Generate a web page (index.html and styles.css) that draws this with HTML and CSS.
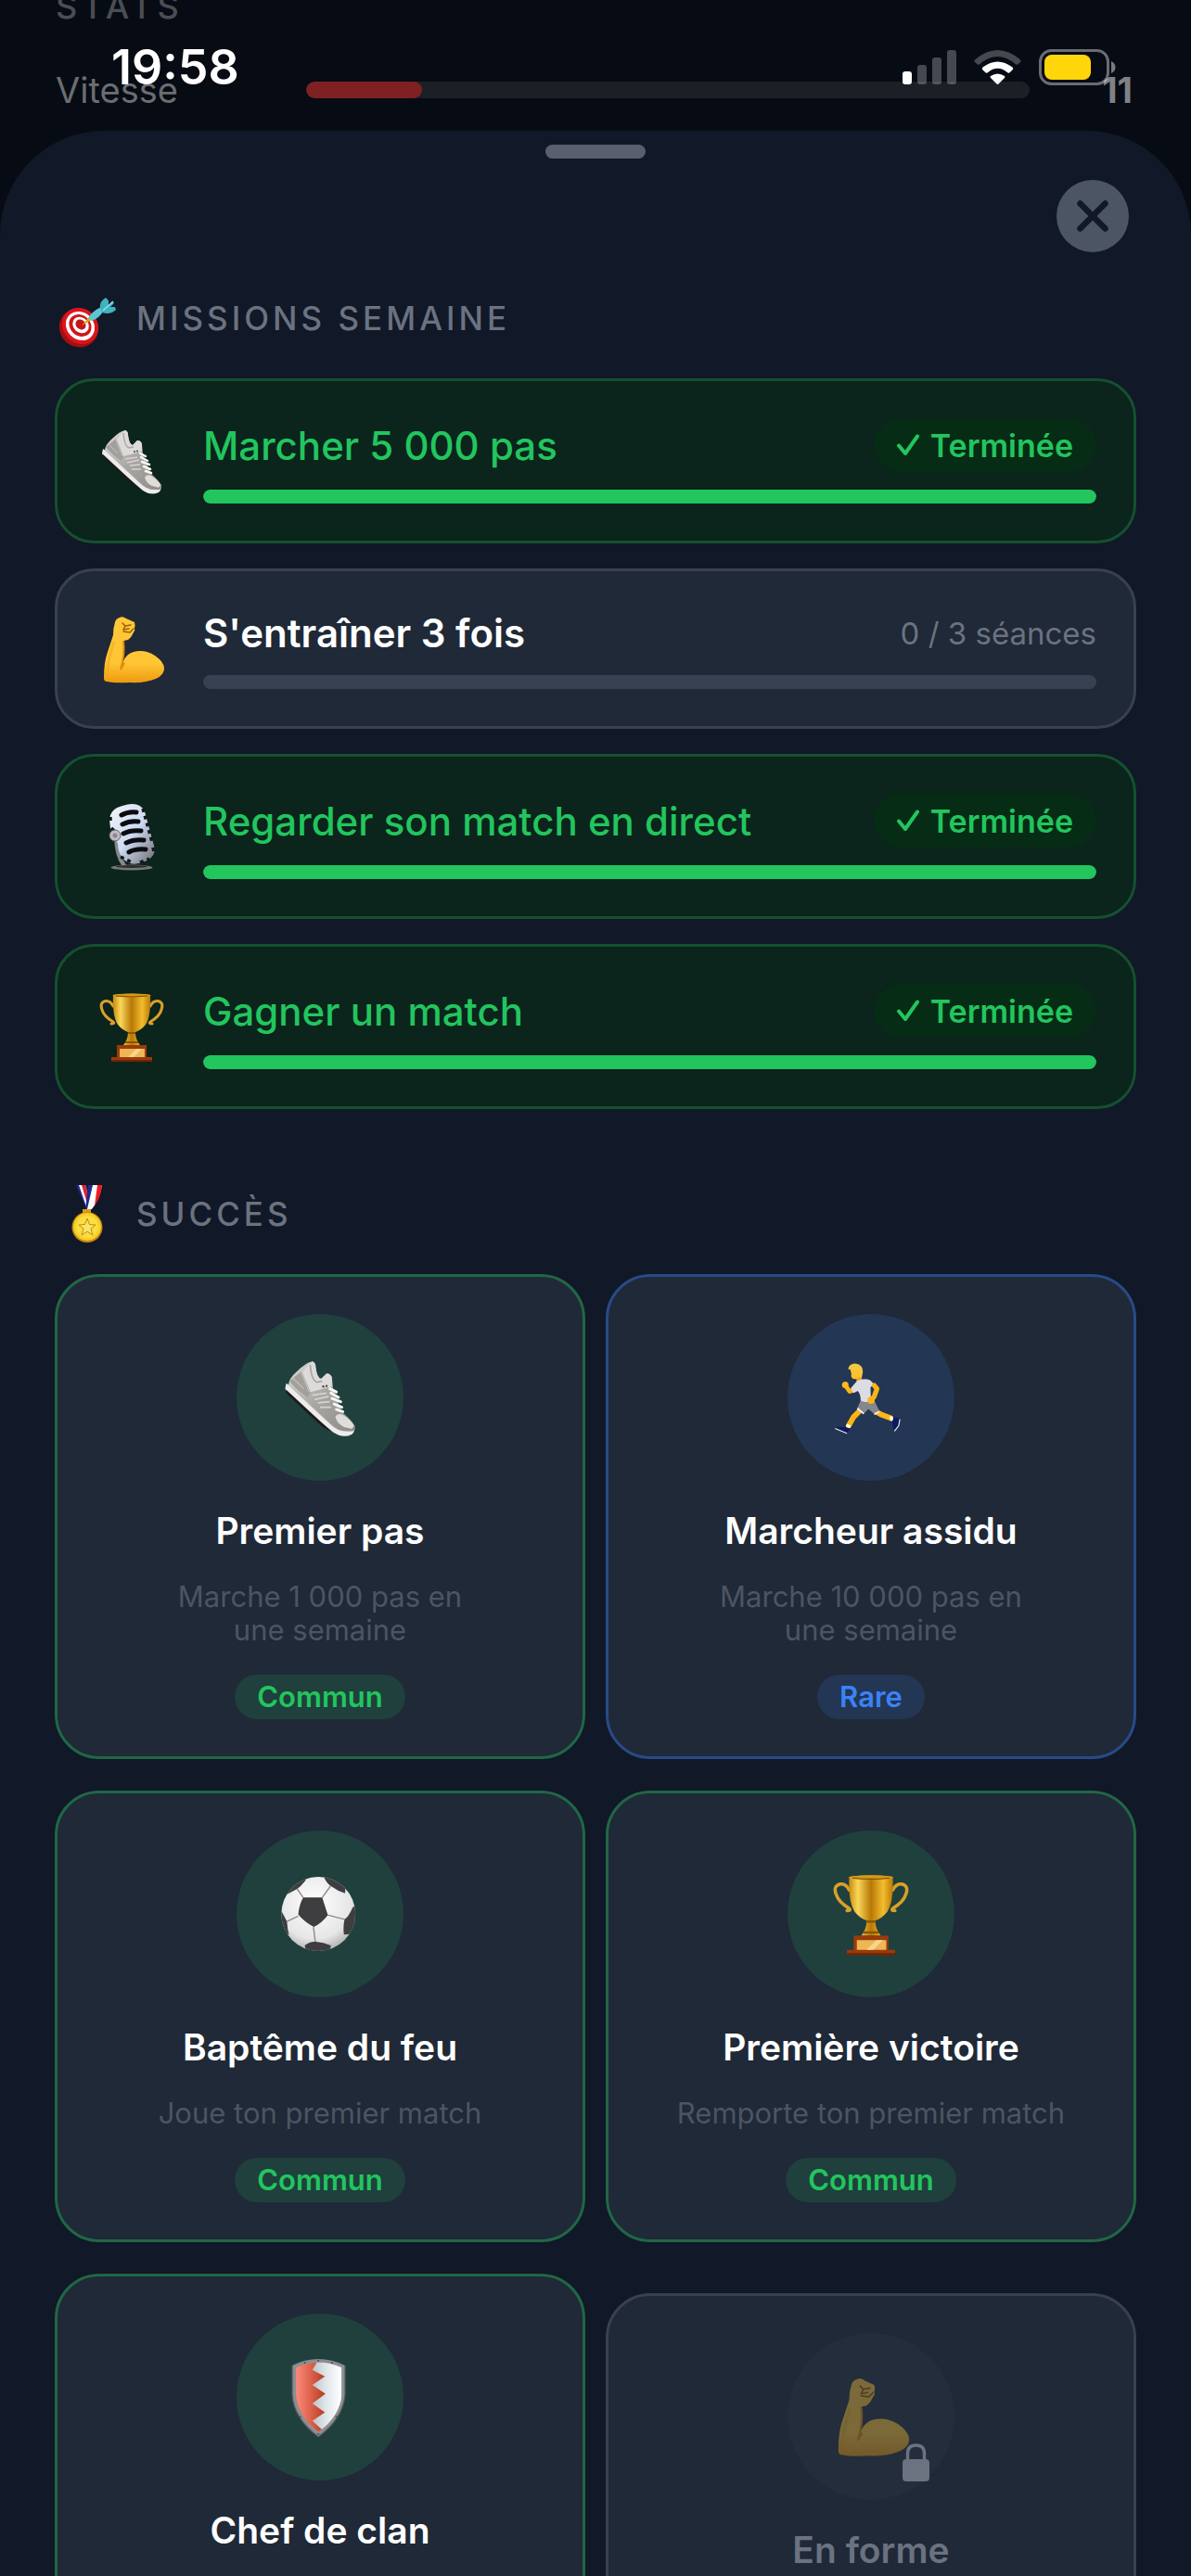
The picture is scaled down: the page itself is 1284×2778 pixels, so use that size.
FILE: index.html
```html
<!DOCTYPE html>
<html lang="fr">
<head>
<meta charset="utf-8">
<meta name="viewport" content="width=device-width, initial-scale=1">
<title>Missions et succès</title>
<link rel="stylesheet" href="styles.css">
</head>
<body>
<svg class="sprite" aria-hidden="true">
  <defs>
    <linearGradient id="gold" x1="0" x2="1" y1="0" y2="0">
      <stop offset="0" stop-color="#c98a0c"/><stop offset=".2" stop-color="#f9d75a"/><stop offset=".5" stop-color="#b87806"/><stop offset=".78" stop-color="#f3bd2e"/><stop offset="1" stop-color="#b97a08"/>
    </linearGradient>
    <linearGradient id="skin" x1="0" x2="0" y1="0" y2="1">
      <stop offset="0" stop-color="#ffc83a"/><stop offset=".7" stop-color="#ffc634"/><stop offset="1" stop-color="#ee9a10"/>
    </linearGradient>
    <linearGradient id="steel" x1="0" x2="1" y1="0" y2="1">
      <stop offset="0" stop-color="#f4f4f6"/><stop offset=".5" stop-color="#cfdcf5"/><stop offset="1" stop-color="#6c6c70"/>
    </linearGradient>
    <linearGradient id="shoe-body" x1="0" x2="1" y1="0" y2="1">
      <stop offset="0" stop-color="#dedddb"/><stop offset=".5" stop-color="#aaa7a3"/><stop offset="1" stop-color="#8f8c88"/>
    </linearGradient>
    <linearGradient id="red-field" x1="0" x2="1" y1="0" y2="0">
      <stop offset="0" stop-color="#e8492f"/><stop offset=".4" stop-color="#ff8a78"/><stop offset="1" stop-color="#b83a22"/>
    </linearGradient>
    <linearGradient id="white-field" x1="0" x2="1" y1="0" y2="0">
      <stop offset="0" stop-color="#b4babd"/><stop offset=".5" stop-color="#dfe6ea"/><stop offset="1" stop-color="#ffffff"/>
    </linearGradient>
    <radialGradient id="ball-white" cx=".45" cy=".35" r=".7">
      <stop offset="0" stop-color="#ffffff"/><stop offset=".7" stop-color="#e6e6e6"/><stop offset="1" stop-color="#a8a8a8"/>
    </radialGradient>
    <clipPath id="ball-clip"><circle cx="38.500" cy="40" r="34"/></clipPath>
    <clipPath id="shield-clip"><path d="M18 13Q28 8 38.500 8Q49 8 60 13V38Q58 58 38.500 72Q20 58 18 38Z"/></clipPath>
  </defs>

  <symbol id="shoe" viewBox="0 0 80 80">
    <path d="M9 27L8 32Q10 37 14 40L52 72Q61 78 69 74Q73 71 71 65L68 66Z" fill="#ececec"/>
    <path d="M9 33L50 71Q44 69 39 64L11 38Q8 36 9 33Z" fill="#1d1a18"/>
    <path d="M33 7Q36 8 36 12Q37 22 41 23L46 18Q50 18 51 22L52 32L60 53Q69 61 72 66Q73 72 66 71Q57 72 49 64L11 29Q11 23 19 16Q27 8 33 7Z" fill="url(#shoe-body)"/>
    <path d="M33 7Q36 8 36 12Q37 22 41 23L46 18Q50 18 51 22L51 30L31 35L24 17Q29 9 33 7Z" fill="#dddbd9"/>
    <path d="M31 10Q32 24 37 26L42 25" fill="none" stroke="#a9a6a3" stroke-width="1.500"/>
    <path d="M12 25L23 16L31 35L29 40Q18 33 12 25Z" fill="#a3a09c"/>
    <path d="M15 22L25 32M22 15L30 35" stroke="#c4c1bd" fill="none"/>
    <path d="M54 58Q56 54 61 56Q69 61 71 66Q70 70 66 68Q57 67 54 58Z" fill="#deddd9"/>
    <path d="M49 32L55 35M50 36L57 40M51 41L59 44M53 46L60 49M55 51L61 53" stroke="#f7f7f7" stroke-width="2.500" stroke-linecap="round"/>
    <path d="M33 38L46 36M35 42L48 39M38 45L49 44M40 49L50 49" stroke="#d6d3d0" stroke-width="1.500"/>
    <circle cx="43" cy="30" r="1" fill="#444"/><circle cx="46" cy="29.500" r="1" fill="#444"/>
  </symbol>

  <symbol id="arm" viewBox="0 0 80 80">
    <path d="M22 11Q23 7 27 6Q30 4 34 7L43 11Q44 15 43 17Q44 20 42 22Q40 27 36 30L31 31Q32 45 29 61Q31 46 42 43Q54 40 65 47Q75 54 75 61Q75 68 66 72Q54 77 38 76Q22 77 13 75Q10 75 10 71Q10 54 14 43L20 25Q20 17 22 11Z" fill="url(#skin)"/>
    <path d="M13 71Q14 52 21 32" fill="none" stroke="#f1a51d" stroke-width="3" opacity=".5"/>
    <path d="M31 31Q33 45 28 62L32 55" fill="none" stroke="#dd8b0d" stroke-width="2"/>
    <path d="M30 12L33 15L31 19L37 18M33 15L39 14M42 18L38 22L31 21" fill="none" stroke="#a05f05" stroke-width="1.600" stroke-linecap="round" stroke-linejoin="round"/>
  </symbol>

  <symbol id="mic" viewBox="0 0 80 80">
    <ellipse cx="40" cy="73.500" rx="22.500" ry="3" fill="#77777a"/><ellipse cx="40" cy="72.500" rx="17" ry="1.500" fill="#2c2c2e"/>
    <path d="M21 42Q22 62 29 71L34 71Q27 60 26 42Z" fill="#87878b"/>
    <path d="M16 22Q17 10 30 7Q48 1 54 13L64 50Q67 62 54 67Q38 74 30 63Q25 57 25 48L17 31Z" fill="url(#steel)"/>
    <path d="M17 19V27M52 10L62 46M63 52L64 57M18 31L22 35M28 62L40 68M49 68L59 64" stroke="#17171a" stroke-width="3.500" stroke-dasharray="4 4" fill="none"/>
    <path d="M29 17Q36 13 45 14M30 27Q38 23 47 24M31 37Q39 33 50 34M34 47Q42 43 53 44M37 57Q44 53 55 54" stroke="#0c0c10" stroke-width="5" stroke-linecap="round" fill="none"/>
    <circle cx="22" cy="39" r="6" fill="#bdbdc1" stroke="#606064"/><circle cx="22" cy="39" r="2.500" fill="#8a8a8e"/>
  </symbol>

  <symbol id="trophy" viewBox="0 0 80 80">
    <path d="M20 18Q17 12 12 12.500Q5 14 8 22Q10 29 20 35Q22 37 18 37M60 18Q63 12 68 12.500Q75 14 72 22Q70 29 60 35Q58 37 62 37" fill="none" stroke="#d9a029" stroke-width="3" stroke-linecap="round"/>
    <path d="M20 6Q40 3 60 6Q61 29 55 38Q50 44 44 46Q44 54 49 60H31Q36 54 36 46Q30 44 25 38Q19 29 20 6Z" fill="url(#gold)"/>
    <ellipse cx="40" cy="6.500" rx="20.500" ry="2" fill="#d59a1c"/><path d="M23 7Q40 9 57 7" stroke="#7c4c00" fill="none"/>
    <path d="M36 47H44M33 57H47" stroke="#8c5503" stroke-width="2"/>
    <path d="M24 60H56V73H62V77H18V73H24Z" fill="#9a3a0c"/><path d="M18 76H62V78H18Z" fill="#6f2405"/>
    <path d="M27 64H54V73H27Z" fill="#ecb754"/><path d="M36 73L45 64H51L42 73Z" fill="#f7d68c"/>
  </symbol>

  <symbol id="runner" viewBox="0 0 80 80">
    <g fill="none" stroke="#fdb515" stroke-linecap="round" stroke-linejoin="round">
      <path d="M31 51L24 58L19.500 66" stroke-width="5"/><path d="M44.500 53L50 56L58 59" stroke-width="5"/>
      <path d="M25 33L20.500 34.500L16.500 29" stroke-width="4"/>
    </g>
    <circle cx="16.400" cy="28.500" r="3" fill="#fdbb20"/>
    <path d="M26 19L31 18L32 25L27 26Z" fill="#f2a20f"/>
    <path d="M21 15L22 18Q21 22 24 23Q28 24 30 20L30 13L23 12Z" fill="#ffc02b"/>
    <path d="M19 14Q20 9 26 9Q33 10 32.500 17L31.500 22L29 21L29 16Q25 15 19 14Z" fill="#f2c840"/>
    <path d="M27.500 24.500Q34 22 39 24L42.500 27.500L39.500 31L40 44L30.500 45Q31 38 28 34L24 36L21.500 31.500Z" fill="#dcdde3"/>
    <path d="M43 29L45.500 32L43 39L40 43" fill="none" stroke="#fdb515" stroke-width="4.500" stroke-linecap="round" stroke-linejoin="round"/>
    <path d="M30.500 43Q37 46 43 42.500L47.600 52.400L43 55L37.600 50.700L33.400 55L27.500 49.500Z" fill="#85878c"/>
    <path d="M27.500 50L33.400 55M43 55.500L47.600 53" stroke="#f4f4f4" stroke-width="1.500"/>
    <circle cx="40" cy="42.500" r="3.300" fill="#fdb515"/>
    <path d="M17.500 65.500L21 67M58 57.500L59.500 61.500" stroke="#fff" stroke-width="2.500"/>
    <path d="M7 67L16 67.500L21 68.500L18 73Z" fill="#0d1866"/><path d="M7 68.500L18 73" stroke="#e5e7f0"/>
    <path d="M59.500 62L61 58.500L66 59L65 66L61 70.500L60 66Z" fill="#0d1866"/><path d="M66.500 60L65.400 66L61.500 71" fill="none" stroke="#e5e7f0"/>
  </symbol>

  <symbol id="ball" viewBox="0 0 80 80">
    <circle cx="38.500" cy="40" r="34" fill="url(#ball-white)"/>
    <g clip-path="url(#ball-clip)">
      <path d="M24.600 25L19 17M42 25L49.600 14.500M47 41L62.500 45M34 52L35.700 65.600M20 42L9.700 47" stroke="#8d8d8d" stroke-width="1.200" fill="none"/>
      <path d="M24.600 25H42L47.200 41Q42 48 34.300 52Q25 47 20 40.500Q21 31 24.600 25Z" fill="#3e3e40"/>
      <path d="M8 23L19 17Q26 12 29 5L10 4ZM43 5Q46 12 50 14.500Q56 19 63 21L64 4ZM75 30L70 34Q66 43 62.500 45Q61 52 62 59L75 58ZM26 69Q31 65 36 65.600Q43 66 50 69L48 78H28ZM3 34L5 38L9.700 47Q10 54 11.500 59L3 58Z" fill="#3e3e40"/>
    </g>
  </symbol>

  <symbol id="shield" viewBox="0 0 80 80">
    <path d="M14.500 11Q26 5 38.500 5Q51 5 63 11V38Q61 60 38.500 76.500Q16 60 14.500 38Z" fill="#8c8e92"/>
    <path d="M14.500 11V38Q16 60 38.500 76.500Q61 60 63 38V11" fill="none" stroke="#58595d"/>
    <g clip-path="url(#shield-clip)">
      <path d="M30 0H60V80H30Z" fill="url(#white-field)"/>
      <path d="M0 0H42L33 15L44.500 21L33 29L45 37L33 46L44.500 54L33 62L42 70V80H0Z" fill="url(#red-field)"/>
    </g>
    <g fill="#48494c"><circle cx="38.500" cy="6.500" r=".8"/><circle cx="26" cy="8.500" r=".8"/><circle cx="51" cy="8.500" r=".8"/><circle cx="22" cy="58" r=".8"/><circle cx="55" cy="58" r=".8"/><circle cx="38.500" cy="74" r=".8"/></g>
  </symbol>

  <symbol id="target" viewBox="0 0 66 66">
    <ellipse cx="24" cy="43.500" rx="21.500" ry="20.500" transform="rotate(40 24 43.500)" fill="#a80d12"/>
    <ellipse cx="25.500" cy="41.500" rx="20.500" ry="18.500" transform="rotate(45 25.500 41.500)" fill="#d9161c"/>
    <ellipse cx="25.500" cy="41.500" rx="16.500" ry="14.500" transform="rotate(45 25.500 41.500)" fill="#fff"/>
    <ellipse cx="25.500" cy="41" rx="13" ry="11" transform="rotate(45 25.500 41)" fill="#cf161b"/>
    <ellipse cx="26" cy="40.500" rx="9.500" ry="8" transform="rotate(45 26 40.500)" fill="#fff"/>
    <ellipse cx="26" cy="40" rx="6" ry="5" transform="rotate(45 26 40)" fill="#c4151a"/>
    <path d="M27 41L35 32L38 35Z" fill="#dca51b"/>
    <path d="M34 33Q38 26 48 21L50 26Q46 33 38 36Z" fill="#5cc6d3"/>
    <path d="M47 22Q46 15 53 11L56 14V20L60 15L62 17L58 21H63L64 24Q58 30 49 27Z" fill="#3fb1c0"/><path d="M50 25L61 15" stroke="#93e3ea" stroke-width="1.500"/>
  </symbol>

  <symbol id="medal" viewBox="0 0 66 66">
    <path d="M21 2H32L37 20L33 30Z" fill="#1c2a8c"/><path d="M24 2H31L36 22L33 28Z" fill="#fff"/><path d="M27 2H31L35 17L33 22Z" fill="#e1232b"/>
    <path d="M34 2H49Q47 18 37 29H31Z" fill="#1c2a8c"/><path d="M39 2H49Q46 18 38 28L33 28Z" fill="#fff"/><path d="M44 2H49Q48 15 41 24Z" fill="#ee1d23"/>
    <path d="M28 28H37V34H28Z" fill="#d99d18"/><circle cx="33" cy="47.500" r="16.500" fill="#c9870b"/><circle cx="33" cy="47" r="15" fill="#f5cf2c"/><circle cx="33" cy="47" r="12" fill="#fbdd3f"/>
    <path d="M33 38L35.500 44.500L42 45L37 49L39 56L33 52L27 56L29 49L24 45L30.500 44.500Z" fill="#f9e468" stroke="#bd8c10" stroke-linejoin="round"/>
  </symbol>
</svg>

<div class="screen">
  <section class="backdrop">
    <h2 class="stats-title">STATS</h2>
    <div class="stat">
      <span class="stat-label">Vitesse</span>
      <div class="stat-track"><div class="stat-fill" style="width:16%"></div></div>
      <span class="stat-value">11</span>
    </div>
  </section>

  <div class="status-bar">
    <span class="clock">19:58</span>
    <div class="status-icons">
      <svg width="58" height="37" viewBox="0 0 58 37" fill="#fff"><rect y="23" width="10" height="14" rx="3"/><g opacity=".25"><rect x="16" y="16" width="10" height="21" rx="3"/><rect x="32" y="8" width="10" height="29" rx="3"/><rect x="48" width="10" height="37" rx="3"/></g></svg>
      <svg width="51" height="37" viewBox="0 0 51 37" fill="#fff"><path opacity=".25" d="M1.500 10Q-.5 11.500 1.200 13.200L3.800 15.500Q5 16.300 6.200 15.200Q25.500-1 44.800 15.200Q46 16.300 47.200 15.500L49.800 13.200Q51.500 11.500 49.500 10Q25.500-10 1.500 10Z"/><path d="M9.500 18.500Q8 20 9.300 21.300L12.800 24.400Q13.800 25 14.800 24.200Q25.500 15.500 36.200 24.200Q37.200 25 38.200 24.400L41.700 21.300Q43 20 41.500 18.500Q25.500 6.500 9.500 18.500Z"/><path d="M18 28Q17.200 29 18 30L24.500 36.500Q25.500 37.300 26.500 36.500L33 30Q33.800 29 33 28Q25.500 23 18 28Z"/></svg>
      <svg width="83" height="39" viewBox="0 0 83 39"><rect x="1.500" y="1.500" width="73" height="36" rx="12" fill="none" stroke="#fff" stroke-opacity=".4" stroke-width="3"/><path d="M78 13Q82.500 15 82.500 19.500T78 26Z" fill="#fff" fill-opacity=".45"/><rect x="6" y="6" width="50" height="27" rx="8" fill="#ffd60a"/></svg>
    </div>
  </div>

  <main class="sheet">
    <div class="grabber"></div>
    <button class="close" type="button" aria-label="Fermer">
      <svg width="34" height="34" viewBox="0 0 34 34"><path d="M3.500 3.500L30.500 30.500M30.500 3.500L3.500 30.500" stroke="#111827" stroke-width="6.500" stroke-linecap="round"/></svg>
    </button>

    <section class="section">
      <h2 class="section-title"><svg class="section-icon"><use href="#target"/></svg>MISSIONS SEMAINE</h2>
      <ul class="missions">
        <li class="mission done">
          <svg class="mission-icon"><use href="#shoe"/></svg>
          <div class="mission-body">
            <div class="mission-head"><h3 class="mission-name">Marcher 5 000 pas</h3><span class="tag"><svg class="tick" viewBox="0 0 24 24"><path d="M2 12.500L9 21L22 2.500"/></svg>Terminée</span></div>
            <div class="track"><div class="fill" style="width:100%"></div></div>
          </div>
        </li>
        <li class="mission">
          <svg class="mission-icon"><use href="#arm"/></svg>
          <div class="mission-body">
            <div class="mission-head"><h3 class="mission-name">S'entraîner 3 fois</h3><span class="count">0 / 3 séances</span></div>
            <div class="track"><div class="fill" style="width:0%"></div></div>
          </div>
        </li>
        <li class="mission done">
          <svg class="mission-icon"><use href="#mic"/></svg>
          <div class="mission-body">
            <div class="mission-head"><h3 class="mission-name">Regarder son match en direct</h3><span class="tag"><svg class="tick" viewBox="0 0 24 24"><path d="M2 12.500L9 21L22 2.500"/></svg>Terminée</span></div>
            <div class="track"><div class="fill" style="width:100%"></div></div>
          </div>
        </li>
        <li class="mission done">
          <svg class="mission-icon"><use href="#trophy"/></svg>
          <div class="mission-body">
            <div class="mission-head"><h3 class="mission-name">Gagner un match</h3><span class="tag"><svg class="tick" viewBox="0 0 24 24"><path d="M2 12.500L9 21L22 2.500"/></svg>Terminée</span></div>
            <div class="track"><div class="fill" style="width:100%"></div></div>
          </div>
        </li>
      </ul>
    </section>

    <section class="section">
      <h2 class="section-title"><svg class="section-icon"><use href="#medal"/></svg>SUCCÈS</h2>
      <div class="achievements">
        <article class="achievement common">
          <div class="medallion"><svg class="medallion-icon"><use href="#shoe"/></svg></div>
          <h3 class="achievement-name">Premier pas</h3>
          <p class="achievement-text">Marche 1 000 pas en<br>une semaine</p>
          <span class="rarity">Commun</span>
        </article>
        <article class="achievement rare">
          <div class="medallion"><svg class="medallion-icon"><use href="#runner"/></svg></div>
          <h3 class="achievement-name">Marcheur assidu</h3>
          <p class="achievement-text">Marche 10 000 pas en<br>une semaine</p>
          <span class="rarity">Rare</span>
        </article>
        <article class="achievement common">
          <div class="medallion"><svg class="medallion-icon"><use href="#ball"/></svg></div>
          <h3 class="achievement-name">Baptême du feu</h3>
          <p class="achievement-text">Joue ton premier match</p>
          <span class="rarity">Commun</span>
        </article>
        <article class="achievement common">
          <div class="medallion"><svg class="medallion-icon"><use href="#trophy"/></svg></div>
          <h3 class="achievement-name">Première victoire</h3>
          <p class="achievement-text">Remporte ton premier match</p>
          <span class="rarity">Commun</span>
        </article>
        <article class="achievement common tall">
          <div class="medallion"><svg class="medallion-icon"><use href="#shield"/></svg></div>
          <h3 class="achievement-name">Chef de clan</h3>
        </article>
        <article class="achievement locked">
          <div class="medallion">
            <svg class="medallion-icon"><use href="#arm"/></svg>
            <svg class="padlock" viewBox="0 0 29 41"><path d="M5.500 18V11Q5.500 2 14.500 2T23.500 11V18" fill="none" stroke="#6b7280" stroke-width="3.500"/><rect y="17" width="29" height="24" rx="4" fill="#6b7280"/></svg>
          </div>
          <h3 class="achievement-name">En forme</h3>
        </article>
      </div>
    </section>
  </main>
</div>
</body>
</html>
```
FILE: styles.css
```css
* {
  box-sizing: border-box;
}

body,
h2,
h3,
p,
ul {
  margin: 0;
  padding: 0;
}

body {
  background: #070b13;
  color: #fff;
  font-family: Inter, "Liberation Sans", sans-serif;
}

.sprite {
  position: absolute;
  width: 0;
  height: 0;
}

.screen {
  position: relative;
  display: flex;
  flex-direction: column;
  height: 100vh;
  overflow: hidden;
}

/* Dimmed page behind the sheet */
.backdrop {
  display: flex;
  flex: none;
  flex-direction: column;
  justify-content: flex-end;
  gap: 46px;
  height: 141px;
  padding: 0 60px 22px;
  overflow: hidden;
}

.stats-title {
  flex: none;
  color: #4a4d54;
  font-size: 36px;
  font-weight: 500;
  line-height: 44px;
  letter-spacing: 5px;
}

.stat {
  display: flex;
  align-items: center;
  line-height: 44px;
}

.stat-label {
  width: 270px;
  color: #6b6d71;
  font-size: 38px;
}

.stat-track {
  flex: 1;
  height: 18px;
  overflow: hidden;
  border-radius: 9px;
  background: #1b2027;
}

.stat-fill {
  height: 100%;
  border-radius: 9px;
  background: #7f2023;
}

.stat-value {
  width: 114px;
  padding-right: 3px;
  color: #808184;
  font-size: 38px;
  font-weight: 700;
  text-align: right;
}

.status-bar {
  position: absolute;
  inset: 53px 81px auto 120px;
  display: flex;
  align-items: center;
  justify-content: space-between;
  height: 39px;
}

.clock {
  font-size: 52px;
  font-weight: 600;
}

.status-icons {
  display: flex;
  align-items: center;
  gap: 19px;
}

/* Sheet */
.sheet {
  display: flex;
  flex: 1;
  flex-direction: column;
  min-height: 0;
  padding: 15px 59px 0;
  overflow: hidden;
  border-radius: 112px 112px 0 0;
  background: #111827;
}

.grabber {
  flex: none;
  align-self: center;
  width: 108px;
  height: 15px;
  border-radius: 8px;
  background: #5a5f70;
}

.close {
  display: grid;
  flex: none;
  align-self: flex-end;
  place-items: center;
  width: 78px;
  height: 78px;
  margin: 23px 8px 38px 0;
  padding: 0;
  border: 0;
  border-radius: 50%;
  background: #4b5563;
}

.section {
  flex: none;
  margin-bottom: 80px;
}

.section-title {
  display: flex;
  align-items: center;
  gap: 20px;
  margin-bottom: 32px;
  padding-left: 2px;
  color: #6b7280;
  font-size: 35px;
  font-weight: 500;
  line-height: 44px;
  letter-spacing: 4px;
}

.section-icon {
  width: 66px;
  height: 66px;
}

/* Missions */
.missions {
  display: grid;
  gap: 27px;
  list-style: none;
}

.mission {
  display: flex;
  align-items: center;
  gap: 37px;
  padding: 40px;
  border: 3px solid #374151;
  border-radius: 42px;
  background: #1f2937;
}

.mission.done {
  border-color: #15502f;
  background: #0b241c;
}

.mission-icon {
  flex: none;
  width: 80px;
  height: 80px;
}

.mission-body {
  display: grid;
  flex: 1;
  gap: 19px;
}

.mission-head {
  display: flex;
  align-items: center;
  justify-content: space-between;
  min-height: 53px;
}

.mission-name {
  font-size: 42px;
  font-weight: 600;
  line-height: 53px;
}

.done .mission-name {
  color: #22c55e;
  font-weight: 500;
}

.tag {
  display: flex;
  align-items: center;
  gap: 12px;
  height: 58px;
  padding: 0 25px;
  border-radius: 29px;
  background: #072c15;
  color: #22c55e;
  font-size: 34px;
  font-weight: 600;
}

.tick {
  width: 24px;
  height: 24px;
  fill: none;
  stroke: currentColor;
  stroke-width: 4px;
  stroke-linecap: round;
  stroke-linejoin: round;
}

.count {
  color: #6b7280;
  font-size: 33px;
}

.track {
  height: 15px;
  overflow: hidden;
  border-radius: 8px;
  background: #374151;
}

.fill {
  height: 100%;
  border-radius: 8px;
  background: #22c55e;
}

/* Achievements */
.achievements {
  display: grid;
  grid-template-columns: 1fr 1fr;
  align-items: center;
  gap: 34px 22px;
}

.achievement {
  display: flex;
  flex-direction: column;
  align-items: center;
  gap: 30px;
  padding: 40px;
  border: 3px solid #374151;
  border-radius: 48px;
  background: #1f2937;
  text-align: center;
}

.common {
  border-color: #206745;
}

.rare {
  border-color: #284b87;
}

.tall {
  min-height: 523px;
}

.locked {
  min-height: 481px;
}

.medallion {
  position: relative;
  display: grid;
  place-items: center;
  width: 180px;
  height: 180px;
  border-radius: 50%;
  background: #232d3b;
}

.common .medallion,
.common .rarity {
  background: #1f403d;
}

.rare .medallion,
.rare .rarity {
  background: #233654;
}

.medallion-icon {
  width: 94px;
  height: 94px;
}

.locked .medallion-icon {
  opacity: .4;
}

.padlock {
  position: absolute;
  right: 27px;
  bottom: 20px;
  width: 29px;
  height: 41px;
}

.achievement-name {
  font-size: 39px;
  font-weight: 600;
  line-height: 47px;
}

.locked .achievement-name {
  color: #6b7280;
}

.achievement-text {
  color: #4b5563;
  font-size: 31px;
  line-height: 36px;
}

.rarity {
  padding: 0 24px;
  border-radius: 24px;
  color: #22c55e;
  font-size: 31px;
  font-weight: 600;
  line-height: 48px;
}

.rare .rarity {
  color: #3b82f6;
}
```
